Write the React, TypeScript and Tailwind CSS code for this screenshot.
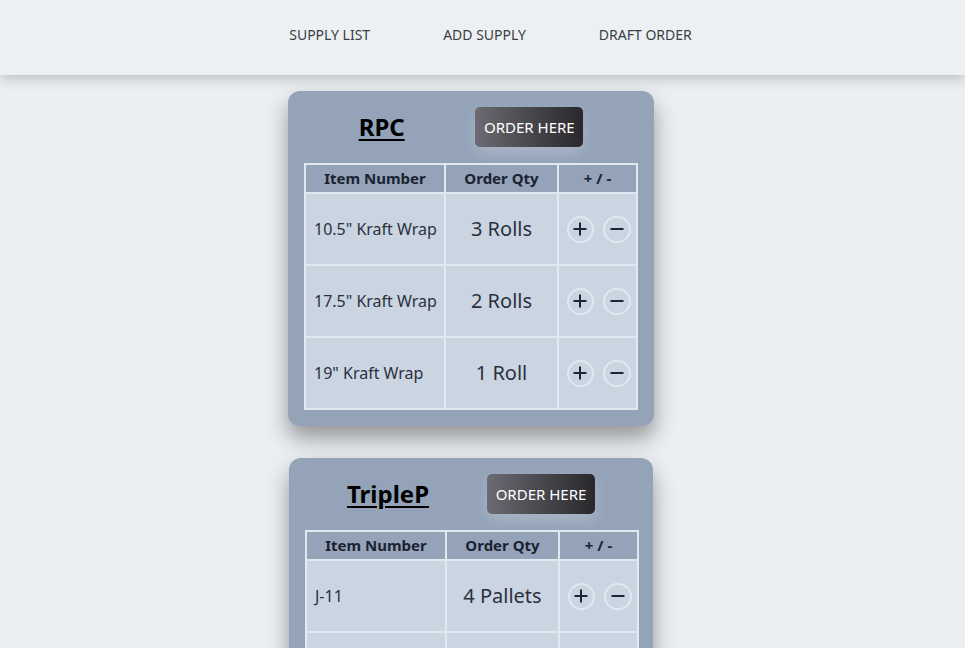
import React from 'react';

interface Row {
  item: string;
  qty: string;
}

interface Supplier {
  name: string;
  width: string;
  rows: Row[];
}

const SUPPLIERS: Supplier[] = [
  {
    name: 'RPC',
    width: 'w-[366px]',
    rows: [
      { item: '10.5" Kraft Wrap', qty: '3 Rolls' },
      { item: '17.5" Kraft Wrap', qty: '2 Rolls' },
      { item: '19" Kraft Wrap', qty: '1 Roll' },
    ],
  },
  {
    name: 'TripleP',
    width: 'w-[364px]',
    rows: [
      { item: 'J-11', qty: '4 Pallets' },
      { item: '', qty: '' },
    ],
  },
];

const PlusIcon = () => (
  <svg width="16" height="16" viewBox="0 0 16 16" fill="none" stroke="#1f2633" strokeWidth="2">
    <path d="M8 1.5v13M1.5 8h13" />
  </svg>
);

const MinusIcon = () => (
  <svg width="16" height="16" viewBox="0 0 16 16" fill="none" stroke="#1f2633" strokeWidth="2">
    <path d="M1.5 8h13" />
  </svg>
);

const SupplierCard: React.FC<{ supplier: Supplier }> = ({ supplier }) => (
  <div className={`${supplier.width} rounded-xl bg-[#94a3b8] px-[16px] pt-4 pb-4 shadow-[0_12px_22px_rgba(0,0,0,0.38)]`}>
    {/* title + order button */}
    <div className="flex items-center justify-evenly gap-4">
      <h2 className="text-[24px] font-bold text-black underline underline-offset-[3px] decoration-2 leading-none">
        {supplier.name}
      </h2>
      <button className="w-[108px] h-10 rounded-[5px] bg-linear-to-r from-[#6c6b73] to-[#29282c] text-white text-[15px] shadow-[0_6px_14px_rgba(255,255,255,0.22)]">
        ORDER HERE
      </button>
    </div>

    <table className="mt-4 w-[332px] table-fixed border-collapse border-2 border-[#e2e8f0]">
      <colgroup>
        <col className="w-[140px]" />
        <col className="w-[113px]" />
        <col className="w-[79px]" />
      </colgroup>
      <thead>
        <tr className="h-[29px] text-[15px] font-bold text-[#1b2232]">
          <th className="border-2 border-[#e2e8f0] p-0">Item Number</th>
          <th className="border-2 border-[#e2e8f0] p-0">Order Qty</th>
          <th className="border-2 border-[#e2e8f0] p-0">+ / -</th>
        </tr>
      </thead>
      <tbody>
        {supplier.rows.map((row, i) => (
          <tr key={i} className="h-[72px] bg-[#cbd5e1]">
            <td className="border-2 border-[#e2e8f0] pl-[8px] text-[16px] text-[#2a3040]">{row.item}</td>
            <td className="border-2 border-[#e2e8f0] text-center text-[20px] text-[#2a3040]">{row.qty}</td>
            <td className="border-2 border-[#e2e8f0] p-0">
              <div className="flex items-center justify-center gap-[9px] pl-[2px]">
                <button className="w-[27px] h-[27px] rounded-full border-2 border-[#e2e8f0] flex items-center justify-center">
                  <PlusIcon />
                </button>
                <button className="w-[28px] h-[27px] rounded-full border-2 border-[#e2e8f0] flex items-center justify-center">
                  <MinusIcon />
                </button>
              </div>
            </td>
          </tr>
        ))}
      </tbody>
    </table>
  </div>
);

export default function App() {
  return (
    <div className="min-h-screen bg-[#eceff2] font-['Noto_Sans',sans-serif]">
      <header className="relative z-10 h-[75px] bg-[#edf0f3] shadow-[0_4px_12px_rgba(0,0,0,0.2)]">
        <nav className="h-full flex items-center justify-center gap-[73px] pl-4 pb-[6px] text-[14px] text-[#3a3d44]">
          <a>SUPPLY LIST</a>
          <a>ADD SUPPLY</a>
          <a>DRAFT ORDER</a>
        </nav>
      </header>

      <main className="flex flex-col items-center gap-8 pt-4 pb-10 pr-[23px]">
        {SUPPLIERS.map(s => (
          <SupplierCard key={s.name} supplier={s} />
        ))}
      </main>
    </div>
  );
}
